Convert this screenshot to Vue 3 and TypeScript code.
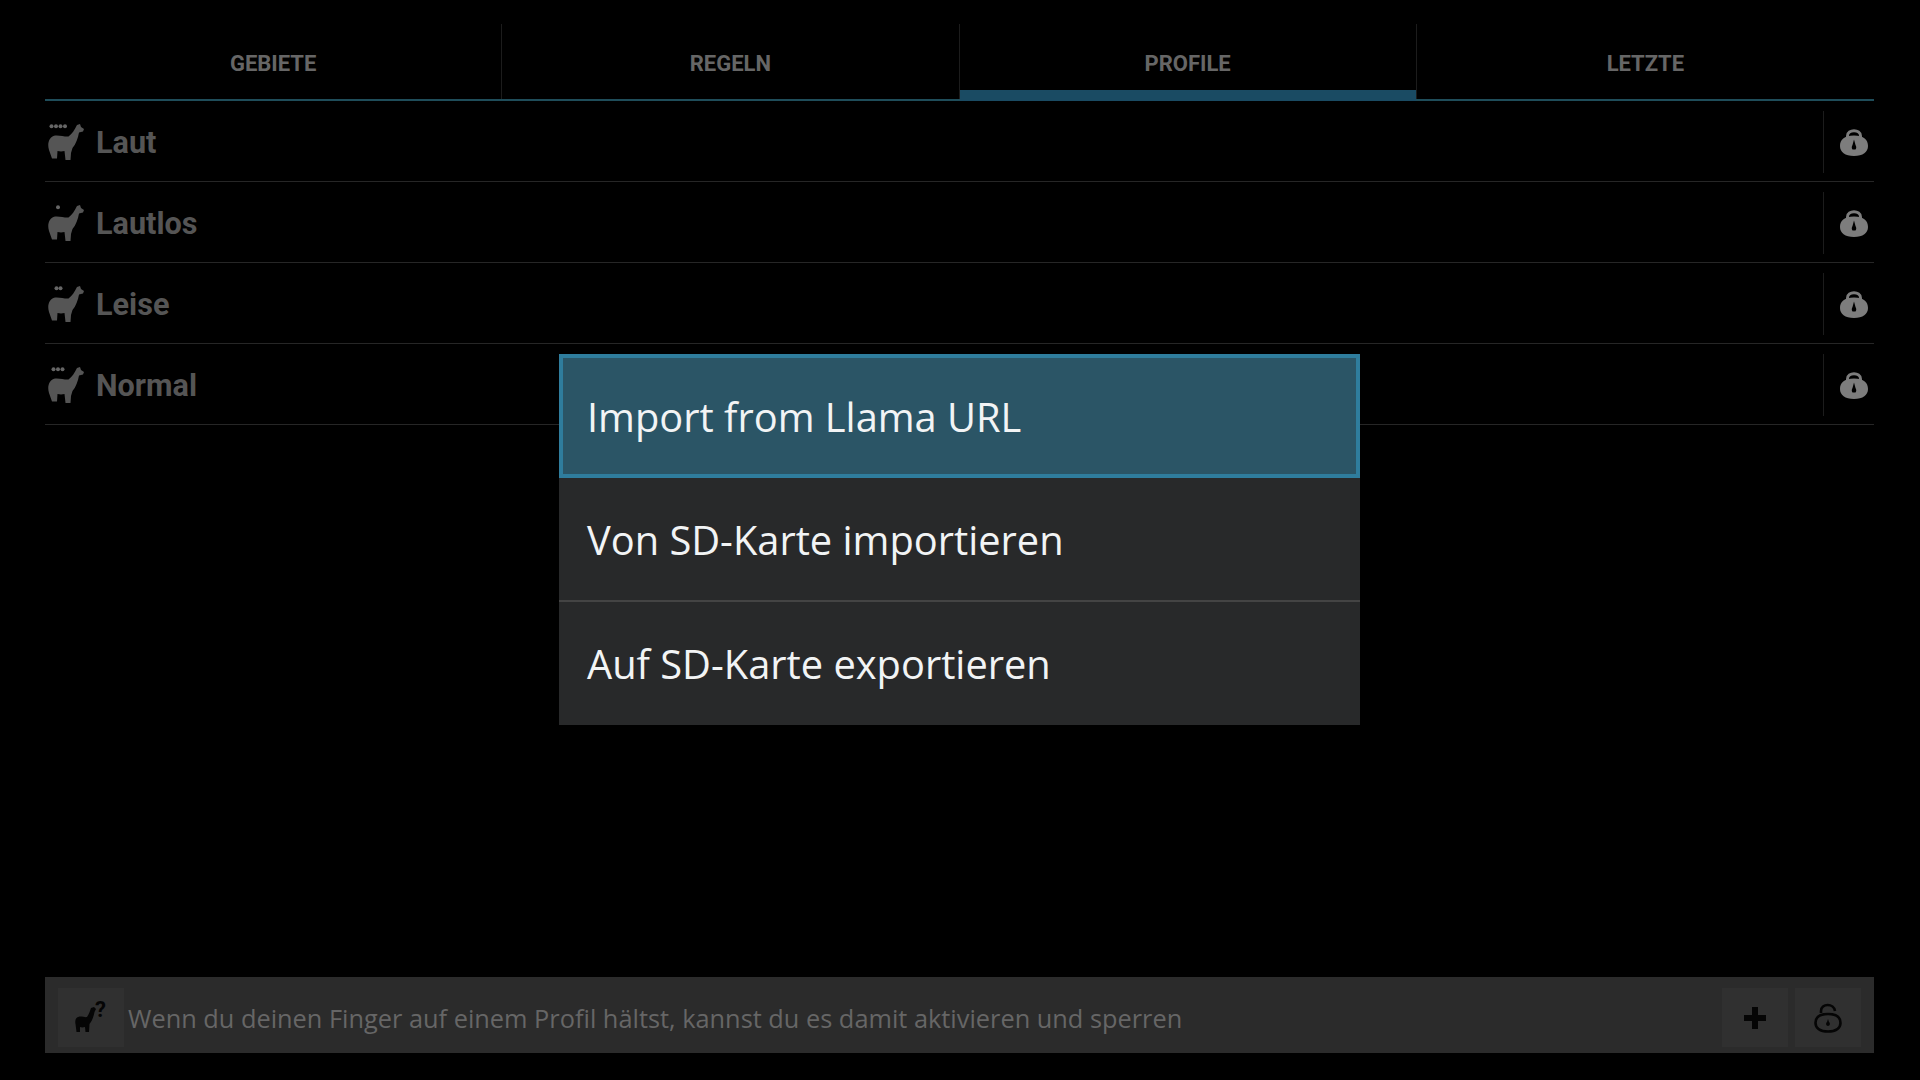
<script setup lang="ts">
const tabs = ['GEBIETE', 'REGELN', 'PROFILE', 'LETZTE']
const profiles = [
  { name: 'Laut', dots: [3.5, 8, 12.5, 17] },
  { name: 'Lautlos', dots: [10] },
  { name: 'Leise', dots: [8.5, 12.5] },
  { name: 'Normal', dots: [5.5, 10, 14.5] }
]
const menu = ['Import from Llama URL', 'Von SD-Karte importieren', 'Auf SD-Karte exportieren']
</script>

<template>
  <div class="screen">
    <div class="tabs">
      <div v-for="(t, i) in tabs" :key="t" class="tab" :class="{ active: i === 2, last: i === 3 }">{{ t }}</div>
    </div>
    <div class="list">
      <div v-for="p in profiles" :key="p.name" class="row">
        <svg class="llama" viewBox="0 0 36 36" width="36" height="36">
          <circle v-for="d in p.dots" :key="d" :cx="d" cy="2.200" r="2" fill="#666" />
          <path fill="#555" d="M29 1 L32 0 L33 3 L36 5 L35 7.500 L31 8.500 C30 14 28 20 24.500 24 L23 29 L22.500 36 L17.500 36 L16.500 27 C14 27.500 12 27.500 9.500 27 L9 34.500 L4 34.500 L1 26 C-1 20 1 12.500 7 11.500 C12 11 17 13 20.500 12.500 C24 10 26.500 6 29 1 Z" />
        </svg>
        <span class="name">{{ p.name }}</span>
        <div class="lock-cell">
          <svg viewBox="0 0 28 28" width="28" height="28">
            <path fill="none" stroke="#7d7d7d" stroke-width="3" d="M7.500 11 V8 C7.500 1 20.500 1 20.500 8 V11" />
            <path fill="#7d7d7d" fill-rule="evenodd" d="M14 7.500 C24 7.500 28 12 28 18 C28 24 23 28 14 28 C5 28 0 24 0 18 C0 12 4 7.500 14 7.500 Z M14 11.500 L12.500 17 C11.500 18.500 11.500 20.500 12.500 21.500 H15.500 C16.500 20.500 16.500 18.500 15.500 17 Z" />
          </svg>
        </div>
      </div>
    </div>
    <div class="spacer"></div>
    <div class="footer">
      <div class="btn">
        <svg viewBox="0 0 40 40" width="40" height="40">
          <path fill="#050505" d="M20 10 L23 9 L25 11 L23.500 14 C22.500 19 21 23 18.500 26 L18 34 L14.500 34 L14 29 C12 29.500 10.500 29.500 9 29 L9 34 L5.500 34 L4.500 26 C3.500 21 6 18.500 9.500 18.500 C12 18.500 14.500 19.500 16 19 C18 16 19 13 20 10 Z" />
          <text x="24" y="18.500" class="q">?</text>
        </svg>
      </div>
      <div class="hint">Wenn du deinen Finger auf einem Profil hältst, kannst du es damit aktivieren und sperren</div>
      <div class="btn">
        <svg viewBox="0 0 22 22" width="22" height="22">
          <path fill="none" stroke="#050505" stroke-width="6" d="M11 0 V22 M0 11 H22" />
        </svg>
      </div>
      <div class="btn">
        <svg viewBox="0 0 28 30" width="28" height="30">
          <path fill="none" stroke="#050505" stroke-width="2.600" d="M7 10 V8 C7 0 20 0 21 8" />
          <path fill="none" stroke="#050505" stroke-width="2.600" d="M14 11 C23 11 26.500 15 26.500 20 C26.500 25 22 28.500 14 28.500 C6 28.500 1.500 25 1.500 20 C1.500 15 5 11 14 11 Z" />
          <path fill="#050505" d="M14 16 L15 19 C16.500 20 16 23 14 23 C12 23 11.500 20 13 19 Z" />
        </svg>
      </div>
    </div>
    <div class="dialog">
      <div v-for="(m, i) in menu" :key="m" class="item" :class="{ selected: i === 0 }">{{ m }}</div>
    </div>
  </div>
</template>

<style scoped>
.screen {
  position: relative;
  width: 1920px;
  height: 1080px;
  box-sizing: border-box;
  padding: 24px 46px 27px 45px;
  background: #000;
  display: flex;
  flex-direction: column;
  overflow: hidden;
}
.tabs {
  display: grid;
  grid-template-columns: repeat(4, 1fr);
  height: 77px;
  box-sizing: border-box;
  border-bottom: 2px solid #1f4d5a;
}
.tab {
  position: relative;
  display: flex;
  align-items: center;
  justify-content: center;
  padding-top: 3px;
  border-right: 1px solid #1c1c1c;
  font: 700 22px Roboto, sans-serif;
  color: #666;
}
.tab.last {
  border-right: 0;
}
.tab.active::after {
  content: "";
  position: absolute;
  left: 0;
  right: 0;
  bottom: -2px;
  height: 11px;
  background: #1a4b63;
}
.row {
  height: 78px;
  padding-top: 2px;
  border-bottom: 1px solid #262626;
  display: flex;
  align-items: center;
}
.llama {
  margin: 0 12px 0 3px;
  flex: none;
}
.name {
  font: 700 30.600px Roboto, sans-serif;
  color: #555;
  flex: 1;
}
.lock-cell {
  height: 62px;
  width: 51px;
  box-sizing: border-box;
  border-left: 1px solid #1c1c1c;
  display: flex;
  align-items: center;
  justify-content: flex-end;
  padding-right: 6px;
}
.spacer {
  flex: 1;
}
.footer {
  height: 76px;
  box-sizing: border-box;
  padding: 5px 13px 0;
  background: #2b2b2b;
  display: flex;
  align-items: center;
}
.btn {
  width: 66px;
  height: 59px;
  background: #303030;
  display: flex;
  align-items: center;
  justify-content: center;
  flex: none;
}
.btn:last-child {
  margin-left: 7px;
}
.q {
  font: 700 22px Roboto, sans-serif;
  fill: #050505;
}
.hint {
  flex: 1;
  padding-left: 4px;
  font: 400 25.350px "Open Sans", sans-serif;
  color: #666;
  white-space: nowrap;
}
.dialog {
  position: absolute;
  left: 559px;
  top: 354px;
  width: 801px;
  background: #28292a;
}
.item {
  height: 124px;
  box-sizing: border-box;
  display: flex;
  align-items: center;
  padding-left: 28px;
  font: 400 39.800px "Open Sans", sans-serif;
  color: #f2f4f5;
  border-bottom: 2px solid #444;
}
.item:last-child {
  height: 123px;
  border-bottom: 0;
}
.item.selected {
  background: #2b5566;
  border: 4px solid #2f7d9d;
  padding-left: 24px;
}
</style>
